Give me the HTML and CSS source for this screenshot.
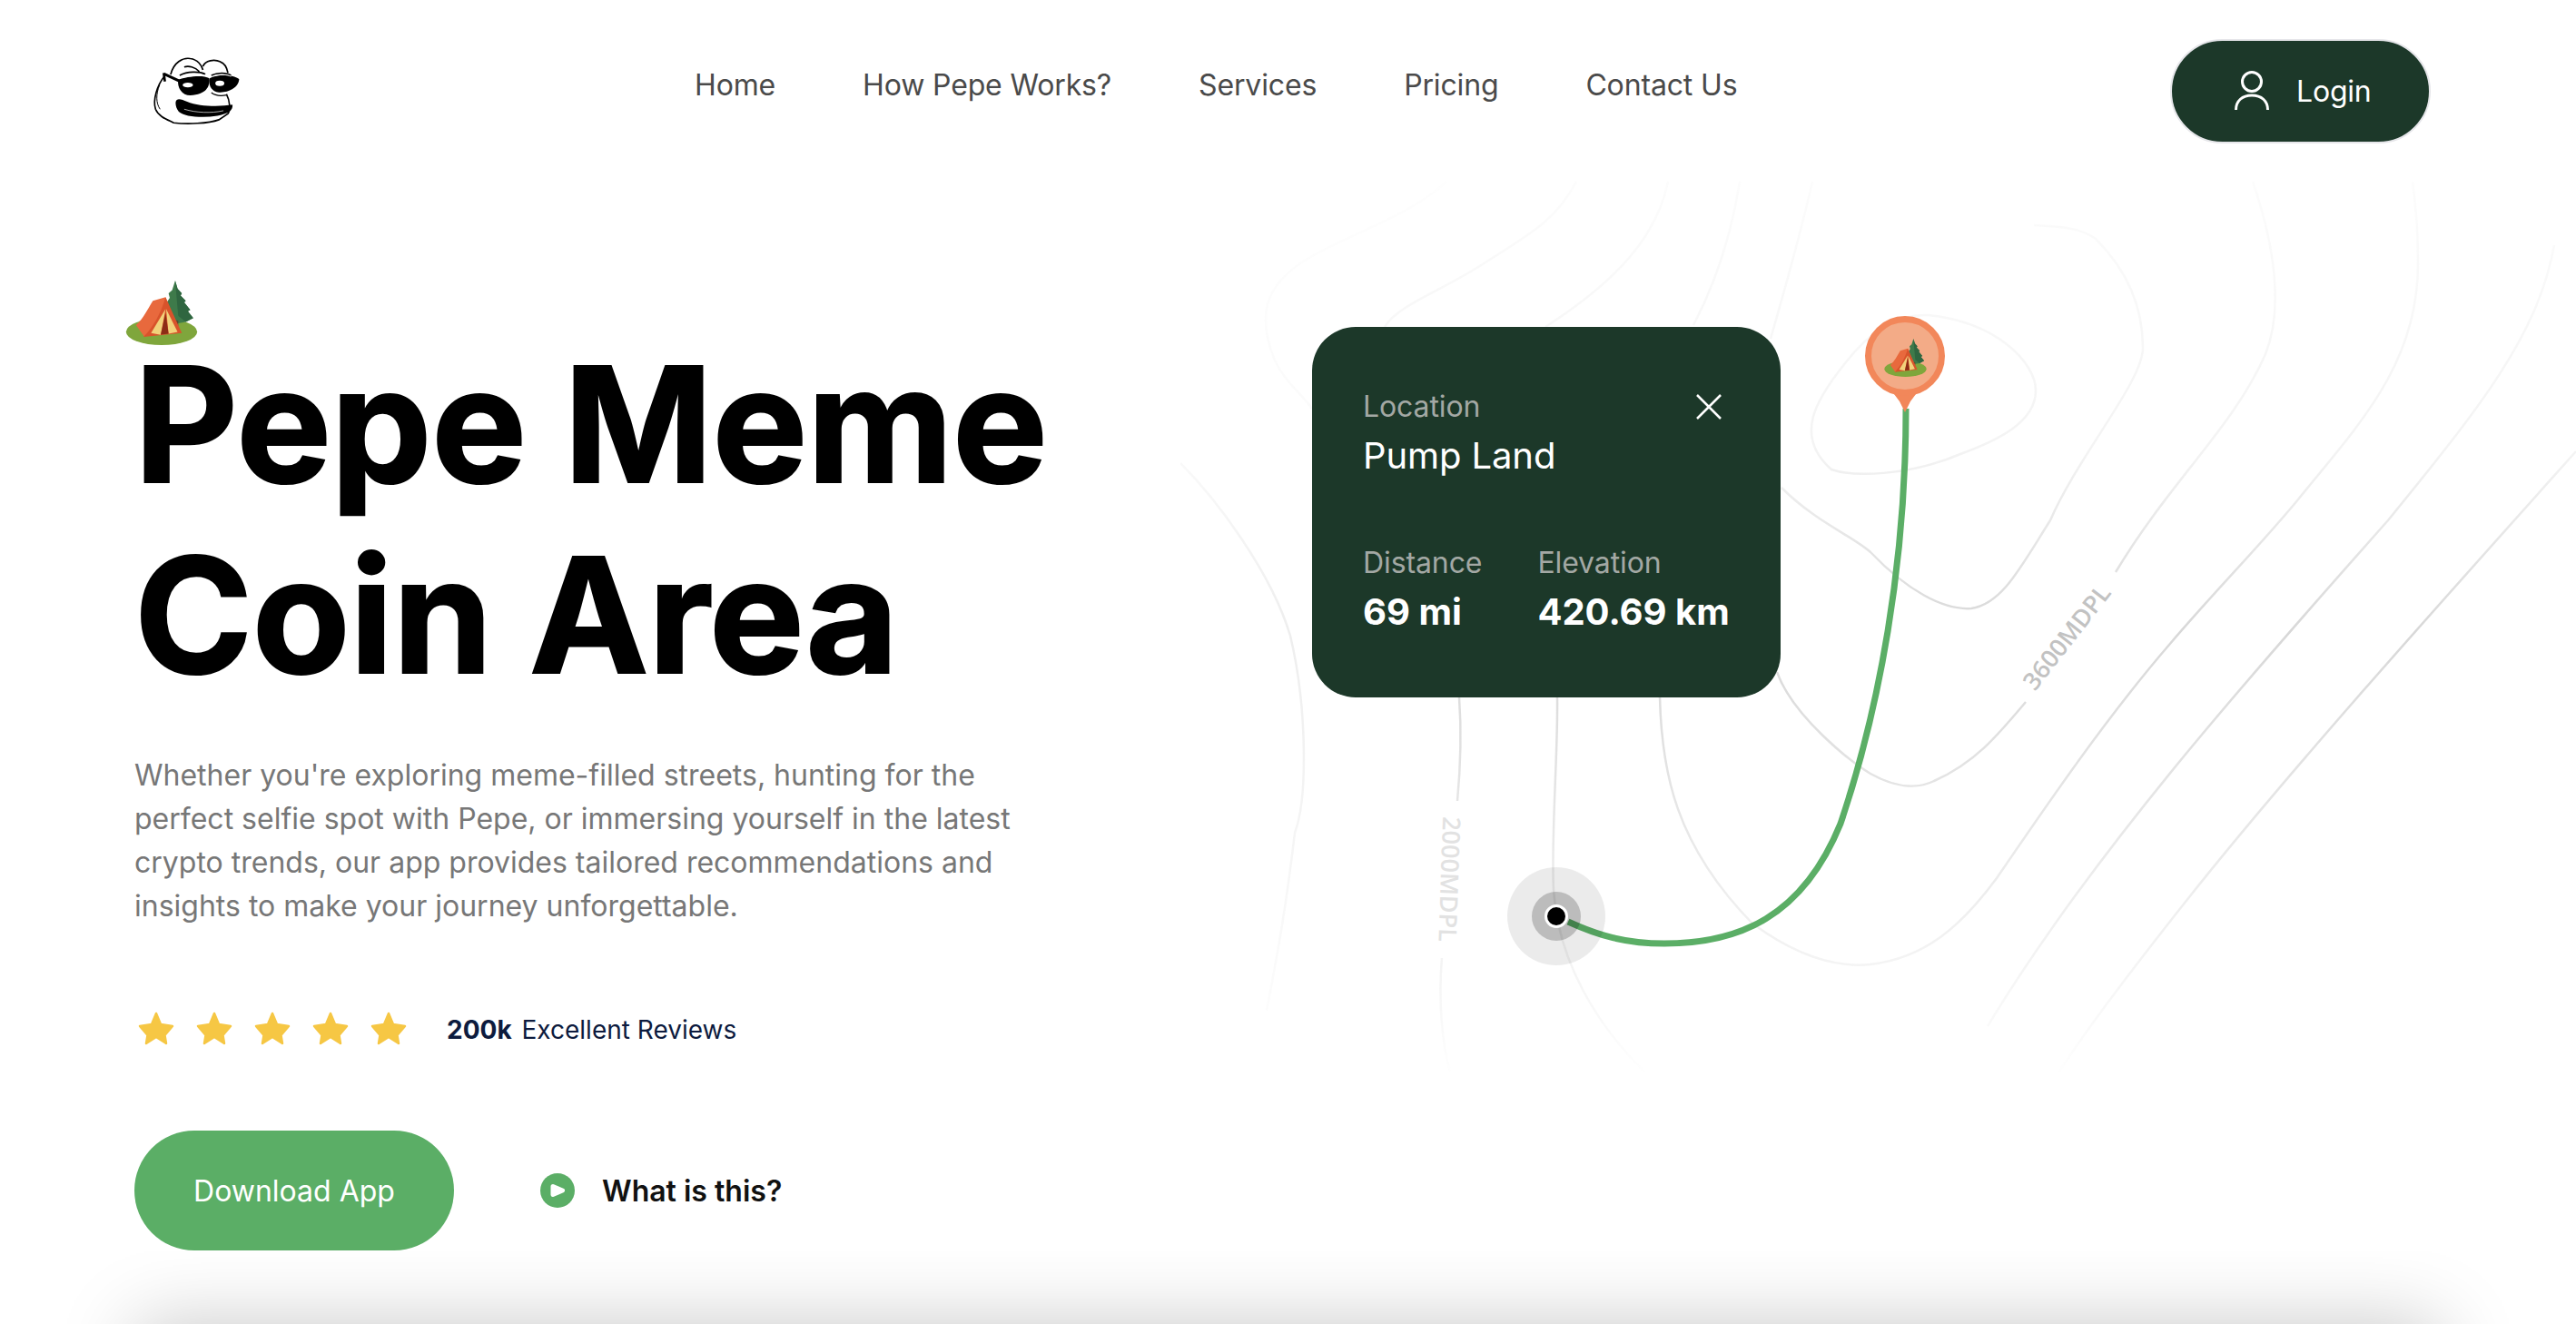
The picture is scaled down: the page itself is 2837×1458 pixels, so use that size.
FILE: index.html
```html
<!DOCTYPE html>
<html lang="en">
<head>
  <meta charset="UTF-8">
  <meta name="viewport" content="width=device-width, initial-scale=1.0">
  <title>Pepe Meme Coin Area</title>
  <link rel="stylesheet" href="styles.css">
</head>
<body>
  <svg class="defs" width="0" height="0">
    <symbol id="tent" viewBox="85 55 240 220">
      <ellipse cx="205" cy="228" rx="118" ry="44" fill="#7fa63c"/>
      <path d="M250 58l8 27 14 15-4 8 17 17-5 5 20 25-8 5 18 22-25 13-25 5-20-10-18-60 10-15-4-15 12-10z" fill="#3e7a4a"/>
      <path d="M250 58l8 27 14 15-4 8 17 17-5 5 20 25-8 5 18 22-25 13-25-20-6-70z" fill="#2f6640"/>
      <rect x="250" y="190" width="10" height="20" fill="#5a4a2e"/>
      <path d="M120 206c24-22 38-52 56-81l42-12 24 60-94 72z" fill="#e8693d"/>
      <path d="M218 113l54 119-127 13c30-30 58-78 73-132z" fill="#d8532b"/>
      <path d="M218 152l-48 80 32 6z" fill="#f1d27b"/>
      <path d="M220 152l38 76-30 6z" fill="#f1d27b"/>
      <path d="M218 165l-16 72 26-3z" fill="#8c2c16"/>
    </symbol>
    <symbol id="star" viewBox="0 0 40 38">
      <path d="M20 3l5 12 13 2-8.500 10 1.500 9-11-7-11 7 1.500-9L2 17l13-2z" fill="#f6c744" stroke="#f6c744" stroke-width="2.500" stroke-linejoin="round"/>
    </symbol>
    <linearGradient id="lineFade" gradientUnits="userSpaceOnUse" x1="0" y1="200" x2="0" y2="1190">
      <stop offset="0" stop-color="#fff" stop-opacity="0.08"/>
      <stop offset="0.3" stop-color="#fff" stop-opacity="0.3"/>
      <stop offset="0.5" stop-color="#fff" stop-opacity="1"/>
      <stop offset="0.72" stop-color="#fff" stop-opacity="0.6"/>
      <stop offset="1" stop-color="#fff" stop-opacity="0"/>
    </linearGradient>
    <mask id="contourMask" maskUnits="userSpaceOnUse" x="1300" y="190" width="1537" height="1000">
      <rect x="1300" y="190" width="1537" height="1000" fill="url(#lineFade)"/>
    </mask>
  </svg>

  <nav class="nav">
    <a class="logo" href="#">
      <svg viewBox="145 95 295 228" width="98" height="76">
        <g fill="none" stroke="#000" stroke-width="5">
          <path d="M185 160c-25 30-40 80-30 110 10 25 40 35 60 45 45 5 115 3 150-10l30-20c8-12 8-40-5-65" fill="#fff"/>
          <path d="M168 190c-12 30-12 60 2 80" stroke-width="3"/>
          <path d="M205 155c10-40 40-57 65-53 25 3 38 23 42 38" fill="#fff"/>
          <path d="M312 128c8-20 38-25 58-15 15 5 22 22 25 37" fill="#fff"/>
          <path d="M250 130c15-5 35 0 50 15M235 158c25-14 65-14 85-4M340 158c20-10 50-10 65 0"/>
          <path d="M340 215c10 8 30 12 50 8" stroke-width="4"/>
        </g>
        <path d="M183 153l52 24" stroke="#000" stroke-width="9"/>
        <path d="M182 150l4 28" stroke="#000" stroke-width="8"/>
        <path d="M230 172c28-10 82-17 102-5 5 28-10 55-62 57-27 0-44-24-40-52z"/>
        <path d="M333 168c25-12 68-17 99 2 0 25-32 46-67 44-27-4-34-24-32-46z"/>
        <ellipse cx="262" cy="190" rx="17" ry="8" fill="#fff"/>
        <ellipse cx="368" cy="184" rx="15" ry="9" fill="#fff"/>
        <path d="M240 162c20-8 60-10 84-3M345 160c20-6 45-6 60 1" stroke="#fff" stroke-width="3" fill="none"/>
        <path d="M222 245c3-13 18-9 38 0 40 17 110 17 150 10 2 20-15 30-50 37-50 8-110 3-128-14-8-10-12-23-10-33z"/>
        <path d="M250 270c40 12 90 14 130 5" stroke="#fff" stroke-width="2" fill="none"/>
      </svg>
    </a>
    <div class="nav-links">
      <a href="#">Home</a>
      <a href="#">How Pepe Works?</a>
      <a href="#">Services</a>
      <a href="#">Pricing</a>
      <a href="#">Contact Us</a>
    </div>
    <a class="login" href="#">
      <svg viewBox="0 0 38 44" width="38" height="44" fill="none" stroke="#fff" stroke-width="3">
        <circle cx="19" cy="12" r="10.500"/>
        <path d="M1.500 43c0-10 7-16 17.500-16s17.500 6 17.500 16"/>
      </svg>
      Login
    </a>
  </nav>

  <main class="hero">
    <section class="intro">
      <svg class="tent-big"><use href="#tent"/></svg>
      <h1>Pepe Meme<br>Coin Area</h1>
      <p class="lead">Whether you're exploring meme-filled streets, hunting for the perfect selfie spot with Pepe, or immersing yourself in the latest crypto trends, our app provides tailored recommendations and insights to make your journey unforgettable.</p>
      <div class="reviews">
        <div class="stars">
          <svg><use href="#star"/></svg>
          <svg><use href="#star"/></svg>
          <svg><use href="#star"/></svg>
          <svg><use href="#star"/></svg>
          <svg><use href="#star"/></svg>
        </div>
        <span class="review-text"><b>200k</b> Excellent Reviews</span>
      </div>
      <div class="actions">
        <a class="download" href="#">Download App</a>
        <a class="what" href="#">
          <svg viewBox="0 0 38 38" width="38" height="38">
            <circle cx="19" cy="19" r="19" fill="#5bae66"/>
            <path d="M14 14.500l10.500 4.500-10.500 4.500z" fill="#fff" stroke="#fff" stroke-width="5" stroke-linejoin="round"/>
          </svg>
          What is this?
        </a>
      </div>
    </section>

    <section class="map">
      <svg class="map-lines" viewBox="1300 190 1537 1000">
        <g class="contours" mask="url(#contourMask)">
          <path class="faint" d="M1593 200C1550 240 1490 255 1440 285C1390 315 1385 350 1404 397C1415 420 1430 430 1445 450"/>
          <path d="M1607 768C1610 810 1608 850 1605 882"/>
          <path d="M1588 1055C1584 1100 1588 1150 1597 1180"/>
          <path d="M1736 200C1715 240 1690 255 1639 287C1590 320 1540 335 1525 360"/>
          <path d="M1715 768C1716 830 1708 920 1711 980C1716 1060 1760 1130 1811 1180"/>
          <path d="M1837 200C1825 260 1780 310 1702 360"/>
          <path d="M1828 768C1830 850 1845 930 1930 1017C1975 1050 2020 1066 2060 1062C2120 1055 2160 1020 2199 967C2255 885 2320 790 2389 710C2440 650 2490 600 2531 550C2600 465 2663 400 2663 290C2663 250 2660 225 2657 200"/>
          <path d="M1957 740C1975 790 2040 840 2060 852C2085 866 2110 870 2130 860C2175 840 2200 810 2231 773"/>
          <path d="M2330 630C2390 530 2460 470 2495 390C2515 340 2505 270 2481 200"/>
          <path d="M1962 537C2000 575 2040 590 2060 608C2100 650 2140 672 2171 670C2205 665 2225 625 2258 573C2290 500 2360 420 2360 383C2360 340 2345 300 2308 263C2290 250 2270 250 2240 248"/>
          <path d="M2813 270C2795 370 2730 450 2630 573C2500 720 2310 930 2189 1130"/>
          <path d="M2837 497C2700 650 2520 850 2407 993C2350 1065 2300 1130 2268 1180"/>
          <path class="faint" d="M1300 510C1340 550 1400 630 1421 700C1440 780 1440 880 1426 917C1415 1010 1405 1060 1395 1113"/>
          <path d="M1916 200C1905 270 1885 320 1865 358"/>
          <path d="M1996 200C1980 270 1965 320 1950 373"/>
          <path d="M2032 400C2000 440 1975 480 2017 517C2040 525 2100 525 2159 500C2200 485 2242 465 2242 430C2242 400 2200 355 2124 347C2085 345 2055 370 2032 400Z"/>
        </g>
        <text class="height-dark" transform="translate(2278 703) rotate(-52)" text-anchor="middle" dominant-baseline="middle">3600MDPL</text>
        <text class="height-light" transform="translate(1594 968) rotate(92)" text-anchor="middle" dominant-baseline="middle">2000MDPL</text>
        <path class="route" d="M2099 450C2099 620 2070 780 2027 907C1985 1010 1915 1039 1833 1039C1790 1039 1760 1030 1727 1015"/>
        <circle cx="1714" cy="1009" r="54" fill="#000" opacity="0.08"/>
        <circle cx="1714" cy="1009" r="27" fill="#000" opacity="0.2"/>
        <circle cx="1714" cy="1009" r="11.500" fill="#000" stroke="#fff" stroke-width="3"/>
        <path d="M2083 430h30l-9 12-6 12-6-12z" fill="#f2875a"/>
        <circle cx="2098" cy="392" r="40.500" fill="#f3ab87" stroke="#f2875a" stroke-width="7"/>
        <use href="#tent" x="2075" y="372" width="47" height="44"/>
      </svg>

      <div class="place-card">
        <div class="place-head">
          <div>
            <div class="card-label">Location</div>
            <div class="place-name">Pump Land</div>
          </div>
          <svg class="close" viewBox="0 0 28 28" width="28" height="28" stroke="#fff" stroke-width="2.500">
            <path d="M1 1l26 26M27 1L1 27"/>
          </svg>
        </div>
        <div class="place-stats">
          <div>
            <div class="card-label">Distance</div>
            <div class="stat-value">69 mi</div>
          </div>
          <div>
            <div class="card-label">Elevation</div>
            <div class="stat-value">420.69 km</div>
          </div>
        </div>
      </div>
    </section>
  </main>

  <div class="fold">
    <div class="next-section"></div>
  </div>
</body>
</html>
```

FILE: styles.css
```css
* {
  box-sizing: border-box;
}

html,
body {
  height: 100%;
}

body {
  margin: 0;
  overflow: hidden;
  background-color: #fff;
  color: #000;
  font-family: Inter, "Liberation Sans", sans-serif;
}

a {
  color: inherit;
  text-decoration: none;
}

.defs {
  position: absolute;
}

/* nav */
.nav {
  display: flex;
  align-items: center;
  height: 190px;
  padding: 44px 160px 34px 168px;
}

.logo {
  display: flex;
  margin-right: 499px;
}

.nav-links {
  display: flex;
  gap: 96px;
  padding-bottom: 14px;
  font-size: 32px;
  letter-spacing: -0.15px;
  color: #4a4a4a;
}

.login {
  display: flex;
  align-items: center;
  gap: 30px;
  width: 287px;
  height: 115px;
  margin-left: auto;
  padding-left: 69px;
  border: 2px solid #e6e6ea;
  border-radius: 58px;
  background-color: #1c3829;
  color: #fff;
  font-size: 32px;
  letter-spacing: -0.2px;
}

/* hero */
.hero {
  display: flex;
  height: 1188px;
}

.intro {
  flex: none;
  width: 1300px;
  padding: 118px 0 0 148px;
}

.tent-big {
  display: block;
  width: 80px;
  height: 73px;
  margin: 0 0 -19px -10px;
}

h1 {
  margin: 0;
  font-size: 176px;
  font-weight: 700;
  letter-spacing: -0.4px;
  line-height: 210px;
  -webkit-text-stroke: 2px #000;
}

.lead {
  width: 1010px;
  margin: 48px 0 0;
  font-size: 32px;
  line-height: 48px;
  color: #777;
}

.reviews {
  display: flex;
  align-items: center;
  gap: 44px;
  margin-top: 91px;
}

.stars {
  display: flex;
  gap: 24px;
  margin-left: 4px;
}

.stars svg {
  width: 40px;
  height: 38px;
}

.review-text {
  margin-top: 4px;
  font-size: 28px;
  color: #0d1b3e;
}

.review-text b {
  margin-right: 3px;
}

.actions {
  display: flex;
  align-items: center;
  gap: 95px;
  margin-top: 94px;
}

.download {
  display: flex;
  align-items: center;
  justify-content: center;
  width: 352px;
  height: 132px;
  border-radius: 66px;
  background-color: #5bae66;
  color: #fff;
  font-size: 32px;
}

.what {
  display: flex;
  align-items: center;
  gap: 30px;
  font-size: 32px;
  font-weight: 600;
  color: #111;
}

/* map */
.map {
  position: relative;
  flex: none;
  width: 1537px;
  height: 1000px;
}

.map-lines {
  display: block;
  width: 1537px;
  height: 1000px;
}

.contours path {
  fill: none;
  stroke: #d8d8d8;
  stroke-width: 2.500;
}

.contours .faint {
  stroke: #eee;
}

.height-dark,
.height-light {
  font-family: "Open Sans", sans-serif;
  font-size: 27px;
  font-weight: 600;
}

.height-dark {
  fill: #c2c2c2;
}

.height-light {
  fill: #e2e2e2;
}

.route {
  fill: none;
  stroke: #5bae66;
  stroke-width: 7;
}

.place-card {
  position: absolute;
  top: 170px;
  left: 145px;
  width: 516px;
  height: 408px;
  padding: 68px 65px 0 56px;
  border-radius: 48px;
  background-color: #1c3829;
  color: #fff;
}

.place-head {
  display: flex;
  justify-content: space-between;
  align-items: flex-start;
}

.close {
  margin-top: 6px;
}

.card-label {
  font-size: 32px;
  line-height: 40px;
  letter-spacing: -0.1px;
  color: #a3a8a4;
}

.place-name {
  margin-top: 10px;
  font-size: 40px;
  line-height: 48px;
  letter-spacing: -0.1px;
}

.place-stats {
  display: flex;
  gap: 61px;
  margin-top: 74px;
}

.stat-value {
  margin-top: 10px;
  font-size: 40px;
  font-weight: 700;
  line-height: 48px;
  white-space: nowrap;
}

/* top edge of the section below the fold, only its shadow shows */
.fold {
  position: relative;
  height: 80px;
  overflow: hidden;
}

.next-section {
  position: absolute;
  top: 80px;
  left: 150px;
  right: 150px;
  height: 300px;
  background-color: #fff;
  box-shadow: 0 0 80px rgba(0, 0, 0, 0.22);
}
```
